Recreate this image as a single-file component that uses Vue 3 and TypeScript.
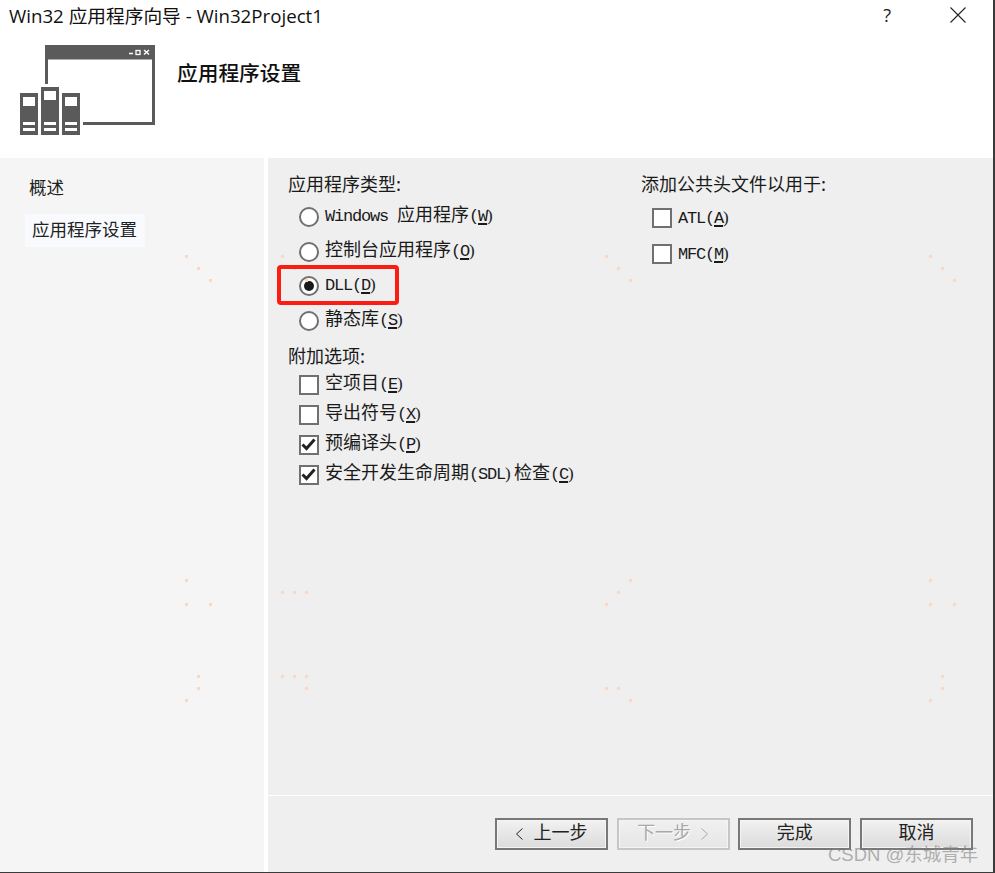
<script setup lang="ts">
interface Segment {
  text: string
  latin: boolean
  key: boolean
  close: boolean
}

const appTypes = [
  { label: 'Windows 应用程序(&W)', checked: false },
  { label: '控制台应用程序(&O)', checked: false },
  { label: 'DLL(&D)', checked: true },
  { label: '静态库(&S)', checked: false },
]

const extras = [
  { label: '空项目(&E)', checked: false },
  { label: '导出符号(&X)', checked: false },
  { label: '预编译头(&P)', checked: true },
  { label: '安全开发生命周期(SDL)检查(&C)', checked: true },
]

const headers = [
  { label: 'ATL(&A)', checked: false },
  { label: 'MFC(&M)', checked: false },
]

// faint specks in the capture, page coordinates
const specks = [
  [186, 256], [198, 268], [210, 280], [282, 256], [294, 268], [306, 280],
  [606, 256], [618, 268], [630, 280], [930, 256], [942, 268], [954, 280],
  [186, 580], [186, 604], [210, 604], [282, 592], [294, 592], [306, 592],
  [630, 580], [618, 592], [606, 604], [930, 580], [930, 604], [954, 604],
  [198, 676], [198, 688], [186, 700], [282, 676], [294, 676], [306, 676],
  [306, 688], [606, 688], [618, 688], [630, 700], [942, 676], [942, 688],
  [930, 700],
]

// "&X" marks the mnemonic, like a Win32 resource string
function parseLabel(label: string): Segment[] {
  const out: Segment[] = []
  for (const run of label.match(/&.|\)|[^&)\u0080-\uffff]+|[\u0080-\uffff]+/g) ?? []) {
    if (run[0] === '&') {
      out.push({ text: run[1], latin: true, key: true, close: false })
    } else {
      out.push({ text: run, latin: run.charCodeAt(0) < 128, key: false, close: run === ')' })
    }
  }
  return out
}
</script>

<template>
  <div class="dialog">
    <header class="head">
      <div class="titlebar">
        <span class="title">Win32 应用程序向导 - Win32Project1</span>
        <span class="help">?</span>
        <svg class="close" width="18" height="18" viewBox="0 0 18 18">
          <path d="M1.5 1.5 16.5 16.5M16.5 1.5 1.5 16.5" stroke="#222" stroke-width="1.1" fill="none" />
        </svg>
      </div>
      <div class="banner">
        <svg class="logo" width="150" height="100" viewBox="0 0 150 100">
          <path d="M36.5 44V6.500H143.500V83.500H73" fill="none" stroke="#5a5a5a" stroke-width="3" />
          <rect x="35" y="5" width="110" height="14.500" fill="#5a5a5a" />
          <path d="M119 13.500h4" stroke="#fff" stroke-width="1.500" />
          <rect x="126" y="10.500" width="4" height="4" fill="none" stroke="#fff" stroke-width="1.300" />
          <path d="M134 10l5 4.500M139 10l-5 4.500" stroke="#fff" stroke-width="1.500" />
          <g v-for="t in [{ x: 10, y: 53 }, { x: 31, y: 47 }, { x: 52, y: 53 }]" :key="t.x">
            <rect :x="t.x" :y="t.y" width="18" :height="95 - t.y" fill="#5a5a5a" />
            <rect :x="t.x + 3" :y="t.y + 4" width="12" height="9" fill="#fff" />
            <rect :x="t.x + 3" y="82" width="12" height="3" fill="#fff" />
            <rect :x="t.x + 3" y="88" width="12" height="3" fill="#fff" />
          </g>
        </svg>
        <h1 class="page-title">应用程序设置</h1>
      </div>
    </header>

    <div class="body">
      <nav class="side">
        <div class="nav-item">概述</div>
        <div class="nav-item active">应用程序设置</div>
      </nav>

      <section class="main">
        <div class="columns">
          <div class="col-left">
            <div class="group-title">应用程序类型:</div>
            <div class="radios">
              <div v-for="o in appTypes" :key="o.label" class="opt radio-row">
                <span class="radio"><i v-if="o.checked"></i></span>
                <span class="label">
                  <span
                    v-for="(s, i) in parseLabel(o.label)"
                    :key="i"
                    :class="{ lat: s.latin, key: s.key, shut: s.close }"
                  >{{ s.text }}</span>
                </span>
              </div>
            </div>
            <div class="group-title extra-title">附加选项:</div>
            <div class="checks">
              <div v-for="o in extras" :key="o.label" class="opt check-row">
                <span class="box">
                  <svg v-if="o.checked" width="16" height="16" viewBox="0 0 16 16">
                    <path d="M1.500 7.500 5.500 11.500 13.500 2.500" fill="none" stroke="#222" stroke-width="3" />
                  </svg>
                </span>
                <span class="label">
                  <span
                    v-for="(s, i) in parseLabel(o.label)"
                    :key="i"
                    :class="{ lat: s.latin, key: s.key, shut: s.close }"
                  >{{ s.text }}</span>
                </span>
              </div>
            </div>
          </div>

          <div class="col-right">
            <div class="group-title">添加公共头文件以用于:</div>
            <div class="headers">
              <div v-for="o in headers" :key="o.label" class="opt header-row">
                <span class="box"></span>
                <span class="label">
                  <span
                    v-for="(s, i) in parseLabel(o.label)"
                    :key="i"
                    :class="{ lat: s.latin, key: s.key, shut: s.close }"
                  >{{ s.text }}</span>
                </span>
              </div>
            </div>
          </div>
        </div>

        <footer class="foot">
          <button class="btn">
            <svg class="chev" width="8" height="12" viewBox="0 0 8 12">
              <path d="M7.500.5 1.500 6l6 5.500" fill="none" stroke="currentColor" stroke-width="1" />
            </svg>
            <span>上一步</span>
          </button>
          <button class="btn off">
            <span>下一步</span>
            <svg class="chev" width="8" height="12" viewBox="0 0 8 12">
              <path d="M.5.5 6.500 6l-6 5.500" fill="none" stroke="currentColor" stroke-width="1" />
            </svg>
          </button>
          <button class="btn">完成</button>
          <button class="btn">取消</button>
        </footer>
      </section>
    </div>

    <i v-for="(p, i) in specks" :key="i" class="speck" :style="{ left: p[0] - 1 + 'px', top: p[1] - 1 + 'px' }"></i>
    <div class="redbox"></div>
    <div class="watermark">CSDN @东城青年</div>
  </div>
</template>

<style>
html,
body {
  margin: 0;
  background: #fff;
}
</style>

<style scoped>
.dialog {
  position: relative;
  width: 995px;
  height: 873px;
  box-sizing: border-box;
  border-right: 2px solid #3a3a3a;
  border-bottom: 1px solid #3a3a3a;
  display: flex;
  flex-direction: column;
  overflow: hidden;
  background: #fff;
  font-family: "Noto Sans CJK SC", sans-serif;
  color: #111;
}
.head {
  height: 158px;
  flex: none;
}
.titlebar {
  height: 29px;
  display: flex;
  align-items: center;
  padding: 0 0 2px 9px;
}
.title {
  font-family: "Open Sans", "Noto Sans CJK SC", sans-serif;
  font-size: 18.700px;
  flex: 1;
}
.help {
  font-family: "Open Sans", sans-serif;
  font-size: 18px;
  margin-right: 58px;
  color: #222;
}
.close {
  margin-right: 26px;
}
.banner {
  display: flex;
  padding: 9px 0 0 10px;
}
.logo {
  flex: none;
}
.page-title {
  margin: 16px 0 0 17px;
  font-size: 20.700px;
  line-height: 32px;
  font-weight: 500;
}
.body {
  flex: 1;
  display: flex;
  min-height: 0;
}
.side {
  width: 264px;
  flex: none;
  box-sizing: border-box;
  background: #f5f5f5;
  padding: 12px 0 0 25px;
  font-size: 17.500px;
  color: #222;
}
.nav-item {
  width: 120px;
  height: 33px;
  line-height: 33px;
  padding-left: 4px;
  box-sizing: border-box;
}
.nav-item.active {
  margin-top: 11px;
  padding-left: 7px;
  line-height: 30px;
  background: #f8fafe;
}
.main {
  flex: 1;
  margin-left: 4px;
  background: #efefef;
  display: flex;
  flex-direction: column;
  min-width: 0;
}
.columns {
  flex: 1;
  display: flex;
  padding: 12px 0 0 20px;
}
.col-left {
  width: 353px;
  flex: none;
}
.group-title {
  font-size: 18px;
  line-height: 26px;
  color: #1a1a1a;
}
.extra-title {
  margin-top: 4px;
}
.radios {
  margin-top: 4px;
  padding-left: 11px;
}
.checks {
  margin-top: 2px;
  padding-left: 11px;
}
.headers {
  margin-top: 4px;
  padding-left: 11px;
}
.opt {
  display: flex;
  align-items: center;
  font-size: 18px;
  color: #1a1a1a;
  white-space: nowrap;
}
.radio-row {
  height: 34.500px;
}
.check-row {
  height: 30px;
}
.header-row {
  height: 36px;
}
.radio {
  width: 20px;
  height: 20px;
  box-sizing: border-box;
  border: 2px solid #707070;
  border-radius: 50%;
  background: #fff;
  display: flex;
  align-items: center;
  justify-content: center;
  flex: none;
}
.radio i {
  width: 10px;
  height: 10px;
  border-radius: 50%;
  background: #1a1a1a;
}
.box {
  width: 20px;
  height: 20px;
  box-sizing: border-box;
  border: 2px solid #707070;
  background: #fff;
  display: flex;
  align-items: center;
  justify-content: center;
  flex: none;
}
.label {
  margin: 0 0 4px 6px;
  line-height: 24px;
}
.header-row .label {
  margin-bottom: 2px;
}
.lat {
  font-family: "Liberation Mono", monospace;
  font-size: 17px;
  letter-spacing: -1.200px;
  white-space: pre;
}
.lat.shut {
  font-family: "Liberation Serif", serif;
  letter-spacing: 0;
  margin-right: 3.300px;
}
.key {
  text-decoration: underline;
  text-decoration-thickness: 2px;
  text-underline-offset: 2px;
}
.foot {
  height: 77px;
  flex: none;
  box-sizing: border-box;
  border-top: 1px solid #fff;
  display: flex;
  justify-content: flex-end;
  gap: 8.700px;
  padding: 22px 20px 0 0;
}
.btn {
  width: 113px;
  height: 32px;
  box-sizing: border-box;
  padding: 0 0 6px;
  border: 2px solid #787878;
  box-shadow: inset 0 0 0 1px #f4f4f4;
  background: linear-gradient(#f1f1f1, #dcdcdc);
  font-family: "Noto Sans CJK SC", sans-serif;
  font-size: 18px;
  line-height: 24px;
  color: #222;
  display: flex;
  align-items: center;
  justify-content: center;
  gap: 10px;
}
.btn.off {
  border-color: #c6c6c6;
  background: linear-gradient(#f0f0f0, #e6e6e6);
  color: #a8a8a8;
  text-shadow: 1px 1px 0 #fff;
}
.chev {
  flex: none;
  margin-top: 6px;
}
.speck {
  position: absolute;
  width: 3px;
  height: 3px;
  background: #fad8c4;
}
.redbox {
  position: absolute;
  left: 277px;
  top: 265px;
  width: 122px;
  height: 40px;
  box-sizing: border-box;
  border: 4px solid #fb1d12;
  border-radius: 4px;
}
.watermark {
  position: absolute;
  left: 828px;
  top: 841px;
  font-family: "Liberation Sans", "Noto Sans CJK SC", sans-serif;
  font-size: 18.500px;
  line-height: 27px;
  color: rgba(130, 130, 130, 0.62);
  white-space: nowrap;
}
</style>
